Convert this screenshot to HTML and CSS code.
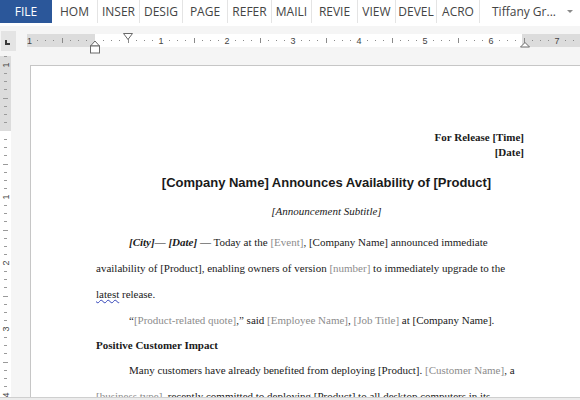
FILE: index.html
```html
<!DOCTYPE html>
<html>
<head>
<meta charset="utf-8">
<title>Press release</title>
<link rel="stylesheet" href="styles.css">
</head>
<body>
<div class="app">
  <nav class="tabs">
    <div class="tab file">FILE</div>
    <div class="tab">HOM</div>
    <div class="tab">INSER</div>
    <div class="tab">DESIG</div>
    <div class="tab">PAGE</div>
    <div class="tab">REFER</div>
    <div class="tab">MAILI</div>
    <div class="tab">REVIE</div>
    <div class="tab">VIEW</div>
    <div class="tab">DEVEL</div>
    <div class="tab">ACRO</div>
    <div class="user">
      <span class="user-name">Tiffany Gr...</span>
      <span class="caret"></span>
      <span class="avatar"></span>
    </div>
  </nav>

  <div class="ruler-row">
    <div class="tab-selector"><span class="l-glyph"></span></div>
    <svg class="hruler" width="553" height="30" viewBox="0 0 553 30">
      <defs>
        <pattern id="hticks" patternUnits="userSpaceOnUse" x="68" y="0" width="66" height="30">
          <rect x="8" y="14" width="1" height="1" fill="#8a8a8a"/>
          <rect x="16" y="14" width="1" height="1" fill="#8a8a8a"/>
          <rect x="24" y="14" width="1" height="1" fill="#8a8a8a"/>
          <rect x="33" y="12" width="1" height="5" fill="#8a8a8a"/>
          <rect x="41" y="14" width="1" height="1" fill="#8a8a8a"/>
          <rect x="49" y="14" width="1" height="1" fill="#8a8a8a"/>
          <rect x="57" y="14" width="1" height="1" fill="#8a8a8a"/>
        </pattern>
      </defs>
      <rect x="0" y="8" width="553" height="13" fill="#ffffff"/>
      <rect x="0" y="8" width="68" height="13" fill="#dcdcdc"/>
      <rect x="495" y="8" width="58" height="13" fill="#dcdcdc"/>
      <rect x="0" y="8" width="553" height="13" fill="url(#hticks)"/>
      <g class="rnum" font-family="Liberation Sans, Arial, sans-serif" font-size="9" fill="#444" text-anchor="middle">
        <text x="2.5" y="18">1</text>
        <text x="134" y="18">1</text>
        <text x="200" y="18">2</text>
        <text x="266" y="18">3</text>
        <text x="332" y="18">4</text>
        <text x="398" y="18">5</text>
        <text x="464" y="18">6</text>
        <text x="530" y="18">7</text>
      </g>
      <polygon points="96.5,7.5 105.5,7.5 101,13.5" fill="#fff" stroke="#6a6a6a"/>
      <polygon points="63.5,20 72.5,20 68,15" fill="#fff" stroke="#6a6a6a"/>
      <rect x="63.5" y="20" width="9" height="7" fill="#fff" stroke="#6a6a6a"/>
      <polygon points="493.5,21 502.5,21 498,16.5" fill="#fff" stroke="#6a6a6a"/>
    </svg>
  </div>

  <div class="workspace">
    <svg class="vruler" width="11" height="341" viewBox="0 0 11 341">
      <defs>
        <pattern id="vticks" patternUnits="userSpaceOnUse" x="0" y="75" width="11" height="66">
          <rect x="4" y="8" width="3" height="1" fill="#9a9a9a"/>
          <rect x="4" y="16" width="3" height="1" fill="#9a9a9a"/>
          <rect x="4" y="24" width="3" height="1" fill="#9a9a9a"/>
          <rect x="3" y="33" width="5" height="1" fill="#9a9a9a"/>
          <rect x="4" y="41" width="3" height="1" fill="#9a9a9a"/>
          <rect x="4" y="49" width="3" height="1" fill="#9a9a9a"/>
          <rect x="4" y="57" width="3" height="1" fill="#9a9a9a"/>
        </pattern>
      </defs>
      <rect x="0" y="0" width="11" height="341" fill="#ffffff"/>
      <rect x="0" y="0" width="11" height="75" fill="#dcdcdc"/>
      <rect x="0" y="0" width="11" height="341" fill="url(#vticks)"/>
      <g font-family="Liberation Sans, Arial, sans-serif" font-size="9" fill="#444" text-anchor="middle">
        <text x="5.5" y="9" dy="3" transform="rotate(-90 5.5 9)">1</text>
        <text x="5.5" y="141" dy="3" transform="rotate(-90 5.5 141)">1</text>
        <text x="5.5" y="207" dy="3" transform="rotate(-90 5.5 207)">2</text>
        <text x="5.5" y="273" dy="3" transform="rotate(-90 5.5 273)">3</text>
        <text x="5.5" y="339" dy="3" transform="rotate(-90 5.5 339)">4</text>
      </g>
    </svg>
    <div class="canvas">
      <article class="page">
        <p class="release">For Release [Time]<br>[Date]</p>
        <h1 class="title">[Company Name] Announces Availability of [Product]</h1>
        <p class="subtitle">[Announcement Subtitle]</p>
        <p class="body indent"><b><i>[City]— [Date]</i> —</b> Today at the <span class="ph">[Event]</span>, [Company Name] announced immediate<br>availability of [Product], enabling owners of version <span class="ph">[number]</span> to immediately upgrade to the<br><span class="spell">latest</span> release.</p>
        <p class="body indent">“<span class="ph">[Product-related quote]</span>,” said <span class="ph">[Employee Name]</span>, <span class="ph">[Job Title]</span> at [Company Name].</p>
        <h2 class="heading">Positive Customer Impact</h2>
        <p class="body indent">Many customers have already benefited from deploying [Product]. <span class="ph">[Customer Name]</span>, a<br><span class="ph">[business type]</span>, recently committed to deploying [Product] to all desktop computers in its</p>
      </article>
    </div>
  </div>

  <div class="hscroll"></div>
</div>
</body>
</html>
```

FILE: styles.css
```css
* { box-sizing: border-box; }

html, body {
  margin: 0;
  padding: 0;
  width: 580px;
  height: 400px;
  overflow: hidden;
  background: #ffffff;
}

.app {
  display: grid;
  grid-template-rows: 26px 30px 341px 3px;
  width: 580px;
  height: 400px;
  overflow: hidden;
}

/* ---------- ribbon tabs ---------- */
.tabs {
  display: grid;
  grid-template-columns: 52px 46px 42px 43px 45px 44px 40px 46px 38px 41px 43px 1fr;
  align-items: start;
  background: #ffffff;
  font-family: "Open Sans", "Noto Sans", sans-serif;
  font-size: 12px;
  color: #444444;
}

.tab {
  height: 23px;
  display: flex;
  align-items: center;
  justify-content: center;
  border-right: 1px solid #e4e4e4;
  white-space: nowrap;
}

.tab.file {
  background: #2b579a;
  color: #ffffff;
  border-right: none;
}

.user {
  height: 23px;
  display: flex;
  align-items: center;
  padding-left: 12px;
  white-space: nowrap;
}

.user-name {
  color: #444444;
}

.caret {
  width: 0;
  height: 0;
  margin-left: 11px;
  border-left: 3px solid transparent;
  border-right: 3px solid transparent;
  border-top: 3px solid #8a8a8a;
}

.avatar {
  width: 8px;
  height: 22px;
  margin-left: 9px;
  align-self: flex-start;
  margin-top: 1px;
  background: linear-gradient(180deg, #5b4a44 0%, #3d2f2c 35%, #8a6d8f 60%, #a68a74 100%);
}

/* ---------- horizontal ruler ---------- */
.ruler-row {
  display: flex;
  align-items: flex-start;
  background: #f5f5f5;
}

.tab-selector {
  width: 15px;
  height: 20px;
  margin: 5px 0 0 1px;
  background: #e4e4e4;
  position: relative;
}

.l-glyph {
  position: absolute;
  left: 4px;
  top: 9px;
  width: 5px;
  height: 5px;
  border-left: 2px solid #3a3a3a;
  border-bottom: 2px solid #3a3a3a;
}

.hruler {
  display: block;
  margin-left: 11px;
}

/* ---------- workspace ---------- */
.workspace {
  display: grid;
  grid-template-columns: 11px 1fr;
  background: #f5f5f5;
  overflow: hidden;
}

.vruler {
  display: block;
}

.canvas {
  padding: 9px 0 0 19px;
  overflow: hidden;
}

.page {
  width: 580px;
  height: 400px;
  background: #ffffff;
  border-left: 1px solid #c6c6c6;
  border-top: 1px solid #c6c6c6;
  padding: 64px 0 0 65px;
  font-family: "Liberation Serif", "Times New Roman", serif;
  font-size: 11px;
  color: #1a1a1a;
}

.page p, .page h1, .page h2 {
  margin: 0;
  width: 428px;
  white-space: nowrap;
}

.release {
  text-align: right;
  font-weight: bold;
  line-height: 15px;
}

.title {
  margin-top: 13px !important;
  padding-left: 33px;
  text-align: center;
  font-family: "Liberation Sans", Arial, sans-serif;
  font-size: 13px;
  font-weight: bold;
  line-height: 20px;
}

.subtitle {
  margin-top: 10px !important;
  padding-left: 33px;
  text-align: center;
  font-style: italic;
  font-size: 11px;
  line-height: 16px;
}

.body {
  line-height: 26px;
}

.subtitle + .body {
  margin-top: 10px !important;
}

.indent {
  text-indent: 33px;
}

.heading {
  font-size: 11px;
  font-weight: bold;
  line-height: 24px;
}

.ph {
  color: #8c8c8c;
}

.spell {
  text-decoration: underline wavy #3344b8;
  text-decoration-thickness: 1px;
  text-underline-offset: 1px;
}

/* ---------- bottom edge ---------- */
.hscroll {
  background: #ececec;
  border-top: 1px solid #cfcfcf;
}
```
